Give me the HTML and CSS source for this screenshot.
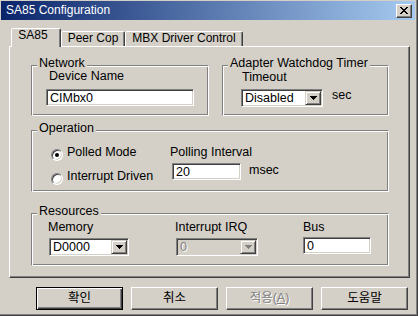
FILE: index.html
```html
<!DOCTYPE html>
<html lang="ko">
  <head>
    <meta charset="UTF-8" />
    <meta name="viewport" content="width=device-width, initial-scale=1.0" />
    <title>SA85 Configuration</title>
    <link rel="stylesheet" href="styles.css">
  </head>
  <body>
    <div class="window">
      <div class="titlebar">
        <span class="title">SA85 Configuration</span>
        <span class="close-btn">
          <svg width="8" height="7" viewBox="0 0 8 7" shape-rendering="crispEdges">
            <path d="M0 0h2v1h-2z M6 0h2v1h-2z M1 1h2v1h-2z M5 1h2v1h-2z M2 2h4v1h-4z M3 3h2v1h-2z M2 4h4v1h-4z M1 5h2v1h-2z M5 5h2v1h-2z M0 6h2v1h-2z M6 6h2v1h-2z" />
          </svg>
        </span>
      </div>

      <div class="content">
        <div class="tabs">
          <span class="tab tab-active tab-sa85">SA85</span>
          <span class="tab tab-peer">Peer Cop</span>
          <span class="tab tab-mbx">MBX Driver Control</span>
        </div>

        <div class="panel">
          <div class="group-row">
            <div class="group group-network">
              <span class="group-title">Network</span>
              <span class="device-label">Device Name</span>
              <input class="textbox device-input" type="text" value="CIMbx0" />
            </div>
            <div class="group group-watchdog">
              <span class="group-title">Adapter Watchdog Timer</span>
              <span class="timeout-label">Timeout</span>
              <div class="timeout-row">
                <div class="combo timeout-combo">
                  <span class="combo-text">Disabled</span>
                  <span class="combo-btn">
                    <svg width="7" height="4" viewBox="0 0 7 4" shape-rendering="crispEdges"><path d="M0 0h7v1h-1v1h-1v1h-1v1h-1v-1h-1v-1h-1v-1h-1z" /></svg>
                  </span>
                </div>
                <span class="unit sec-unit">sec</span>
              </div>
            </div>
          </div>

          <div class="group group-operation">
            <span class="group-title">Operation</span>
            <div class="op-row">
              <div class="radio-list">
                <div class="radio-item">
                  <span class="radio checked"></span>
                  <span>Polled Mode</span>
                </div>
                <div class="radio-item">
                  <span class="radio"></span>
                  <span>Interrupt Driven</span>
                </div>
              </div>
              <div class="interval">
                <span>Polling Interval</span>
                <div class="interval-row">
                  <input class="textbox interval-input" type="text" value="20" />
                  <span class="unit msec-unit">msec</span>
                </div>
              </div>
            </div>
          </div>

          <div class="group group-resources">
            <span class="group-title">Resources</span>
            <div class="res-row">
              <div class="res-col res-memory">
                <span>Memory</span>
                <div class="combo memory-combo">
                  <span class="combo-text">D0000</span>
                  <span class="combo-btn">
                    <svg width="7" height="4" viewBox="0 0 7 4" shape-rendering="crispEdges"><path d="M0 0h7v1h-1v1h-1v1h-1v1h-1v-1h-1v-1h-1v-1h-1z" /></svg>
                  </span>
                </div>
              </div>
              <div class="res-col res-irq">
                <span>Interrupt IRQ</span>
                <div class="combo combo-disabled irq-combo">
                  <span class="combo-text">0</span>
                  <span class="combo-btn">
                    <svg width="7" height="4" viewBox="0 0 7 4" shape-rendering="crispEdges"><path d="M0 0h7v1h-1v1h-1v1h-1v1h-1v-1h-1v-1h-1v-1h-1z" /></svg>
                  </span>
                </div>
              </div>
              <div class="res-col res-bus">
                <span>Bus</span>
                <input class="textbox bus-input" type="text" value="0" />
              </div>
            </div>
          </div>
        </div>

        <div class="buttons">
          <span class="btn btn-default">확인</span>
          <span class="btn">취소</span>
          <span class="btn btn-disabled">적용(<u>A</u>)</span>
          <span class="btn">도움말</span>
        </div>
      </div>
    </div>
  </body>
</html>
```

FILE: styles.css
```css
* {
  box-sizing: border-box;
}
html,
body {
  margin: 0;
  background: #d4d0c8;
}
body {
  font-family: "Liberation Sans", "Noto Sans CJK KR", sans-serif;
  font-size: 12.5px;
  line-height: 13px;
  color: #000;
}
.window {
  width: 418px;
  height: 316px;
  padding: 1px 3px 6px 1px;
  display: flex;
  flex-direction: column;
  background: #d4d0c8;
  box-shadow: inset -1px -1px #404040, inset -2px -2px #808080;
}
.titlebar {
  height: 19px;
  display: flex;
  align-items: center;
  padding-left: 5px;
  background: linear-gradient(to right, #0a246a, #a6caf0);
  color: #fff;
  font-size: 12px;
}
.title {
  flex: 1;
}
.close-btn {
  width: 16px;
  height: 14px;
  margin-right: 3px;
  display: flex;
  align-items: center;
  justify-content: center;
  background: #d4d0c8;
  border: 1px solid;
  border-color: #fff #404040 #404040 #fff;
  box-shadow: inset -1px -1px #808080;
}
.content {
  flex: 1;
  display: flex;
  flex-direction: column;
  padding: 8px 5px 0 8px;
}

/* tabs */
.tabs {
  height: 18px;
  display: flex;
  align-items: flex-end;
  padding-left: 2px;
  position: relative;
  z-index: 1;
  font-size: 12px;
}
.tab {
  height: 15px;
  text-align: center;
  white-space: nowrap;
  background: #d4d0c8;
  border: 1px solid;
  border-bottom: 0;
  border-color: #fff #404040 transparent #fff;
  border-radius: 2px 2px 0 0;
  box-shadow: inset -1px 0 #808080;
}
.tab-active {
  height: 19px;
  margin-bottom: -1px;
}
.tab-sa85 {
  width: 50px;
  padding-right: 6px;
}
.tab-peer {
  width: 64px;
}
.tab-mbx {
  width: 118px;
}
.panel {
  height: 232px;
  display: flex;
  flex-direction: column;
  padding: 18px 20px 11px 21px;
  border: 1px solid;
  border-color: #fff #404040 #404040 #fff;
  box-shadow: inset -1px -1px #808080;
}

/* group boxes */
.group {
  display: flex;
  flex-direction: column;
  align-items: flex-start;
  border: 1px solid;
  border-color: #808080 #fff #fff #808080;
  box-shadow: inset 1px 1px #fff, inset -1px -1px #808080;
}
.group-title {
  margin: -9px 0 0 5px;
  padding: 0 2px;
  background: #d4d0c8;
}
.group-row {
  display: flex;
  gap: 13px;
}
.group-network {
  width: 178px;
  height: 51px;
}
.group-watchdog {
  width: 167px;
  height: 51px;
}
.group-operation {
  height: 62px;
  margin-top: 14px;
}
.group-resources {
  height: 53px;
  margin-top: 21px;
}

/* controls */
.textbox {
  margin: 0;
  height: 17px;
  padding: 0 0 0 3px;
  font: inherit;
  color: #000;
  background: #fff;
  border: 1px solid;
  border-color: #808080 #fff #fff #808080;
  box-shadow: inset 1px 1px #404040, inset -1px -1px #d4d0c8;
  outline: none;
}
.combo {
  height: 18px;
  display: flex;
  padding: 1px;
  background: #fff;
  border: 1px solid;
  border-color: #808080 #fff #fff #808080;
  box-shadow: inset 1px 1px #404040, inset -1px -1px #d4d0c8;
}
.combo-text {
  flex: 1;
  padding-left: 2px;
  line-height: 14px;
}
.combo-btn {
  width: 16px;
  display: flex;
  align-items: center;
  justify-content: center;
  background: #d4d0c8;
  border: 1px solid;
  border-color: #d4d0c8 #404040 #404040 #d4d0c8;
  box-shadow: inset 1px 1px #fff, inset -1px -1px #808080;
}
.combo-disabled {
  background: #d4d0c8;
}
.combo-disabled .combo-text {
  color: #808080;
  text-shadow: 1px 1px #fff;
}
.combo-disabled .combo-btn svg {
  fill: #808080;
}
.radio {
  position: relative;
  flex: none;
  width: 12px;
  height: 12px;
  margin-top: 3px;
  border-radius: 50%;
  background: #fff;
  border: 1px solid;
  border-color: #808080 #fff #fff #808080;
  box-shadow: inset 1px 1px #404040, inset -1px -1px #d4d0c8;
}
.radio.checked::after {
  content: "";
  position: absolute;
  left: 3px;
  top: 3px;
  width: 4px;
  height: 4px;
  border-radius: 50%;
  background: #000;
}

/* network */
.device-label {
  margin-left: 17px;
}
.device-input {
  width: 148px;
  margin: 6px 0 0 14px;
}

/* watchdog */
.timeout-label {
  margin: 1px 0 0 19px;
}
.timeout-row {
  display: flex;
  align-items: flex-start;
  margin: 5px 0 0 18px;
}
.timeout-combo {
  width: 82px;
}
.sec-unit {
  margin: 0 0 0 9px;
}

/* operation */
.op-row {
  display: flex;
  margin-top: 11px;
}
.radio-list {
  width: 119px;
  margin-left: 19px;
  display: flex;
  flex-direction: column;
  gap: 9px;
}
.radio-item {
  display: flex;
  align-items: flex-start;
  gap: 4px;
}
.interval {
  display: flex;
  flex-direction: column;
  align-items: flex-start;
}
.interval-row {
  display: flex;
  align-items: flex-start;
  margin: 4px 0 0 2px;
}
.interval-input {
  width: 69px;
}
.msec-unit {
  margin: 1px 0 0 8px;
}

/* resources */
.res-row {
  display: flex;
  margin-top: 3px;
}
.res-col {
  display: flex;
  flex-direction: column;
  align-items: flex-start;
}
.res-memory {
  width: 127px;
  margin-left: 16px;
}
.res-irq {
  width: 128px;
}
.memory-combo {
  width: 80px;
  margin: 4px 0 0 1px;
}
.irq-combo {
  width: 82px;
  margin: 4px 0 0 1px;
}
.bus-input {
  width: 68px;
  margin-top: 3px;
}

/* dialog buttons */
.buttons {
  display: flex;
  justify-content: flex-end;
  gap: 8px;
  margin-top: 9px;
  padding-right: 2px;
}
.btn {
  width: 87px;
  height: 23px;
  line-height: 21px;
  text-align: center;
  background: #d4d0c8;
  border: 1px solid;
  border-color: #fff #404040 #404040 #fff;
  box-shadow: inset -1px -1px #808080;
}
.btn-default {
  border-color: #000;
  box-shadow: inset 1px 1px #fff, inset -1px -1px #404040, inset -2px -2px #808080;
}
.btn-disabled {
  color: #808080;
  text-shadow: 1px 1px #fff;
}
```
